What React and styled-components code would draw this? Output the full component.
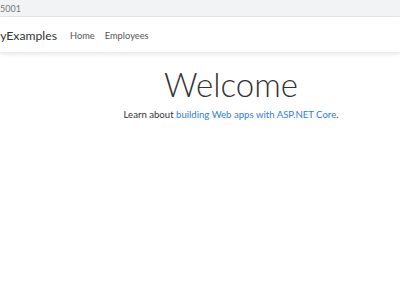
import React from 'react';
import styled, { createGlobalStyle } from 'styled-components';

const GlobalStyle = createGlobalStyle`
  html, body {
    margin: 0;
    padding: 0;
    background: #ffffff;
  }
  body {
    font-family: Lato, 'Open Sans', sans-serif;
    overflow: hidden;
  }
`;

const Page = styled.div`
  width: 400px;
  height: 284px;
  display: flex;
  flex-direction: column;
  overflow: hidden;
`;

const AddressBar = styled.div`
  height: 16px;
  background: #f1f3f4;
  display: flex;
  align-items: center;
  font-size: 9px;
  color: #777;
  border-bottom: 1px solid #e4e6e8;
`;

const NavBar = styled.nav`
  height: 34px;
  background: #fff;
  display: flex;
  align-items: center;
  padding-top: 1px;
  box-shadow: 0 2px 4px rgba(0, 0, 0, 0.08);
  border-bottom: 1px solid #ececec;
`;

const Brand = styled.a`
  font-size: 12.2px;
  color: #333;
  margin-left: -11px;
  margin-right: 13px;
  white-space: nowrap;
`;

const NavLink = styled.a`
  font-size: 9.3px;
  color: #555;
  margin-right: 10px;
`;

const Main = styled.main`
  padding-left: 62px;
  text-align: center;
  padding-top: 12px;
`;

const Title = styled.h1`
  margin: 0;
  font-size: 33px;
  font-weight: 300;
  color: #333;
  line-height: 38px;
`;

const Lead = styled.p`
  margin: 6px 0 0;
  font-size: 9.6px;
  color: #333;
`;

const Link = styled.a`
  color: #2f80d1;
  text-decoration: none;
`;

export default function App() {
  return (
    <Page>
      <GlobalStyle />
      <AddressBar>5001</AddressBar>
      <NavBar>
        <Brand>MyExamples</Brand>
        <NavLink>Home</NavLink>
        <NavLink>Employees</NavLink>
      </NavBar>
      <Main>
        <Title>Welcome</Title>
        <Lead>
          Learn about <Link>building Web apps with ASP.NET Core</Link>.
        </Lead>
      </Main>
    </Page>
  );
}
